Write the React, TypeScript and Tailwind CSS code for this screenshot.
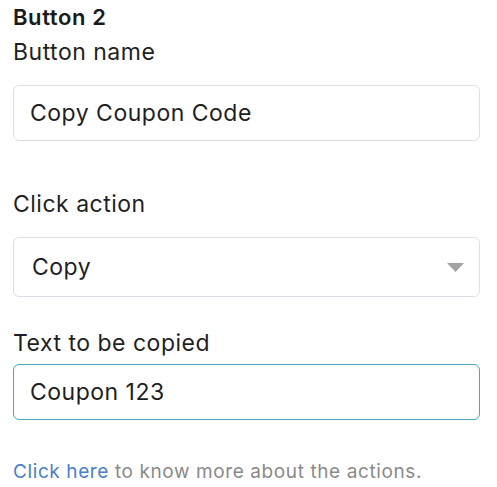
export default function App() {
  return (
    <div className="w-[497px] h-[487px] bg-white pl-[13px] pr-[17px] pt-[3px] tracking-[0.5px]" style={{ fontFamily: "Inter, 'Noto Sans', sans-serif" }}>
      <div className="text-[22px] font-semibold leading-[28px] text-[#1a1a1a] tracking-[0.6px]">Button 2</div>
      <div className="text-[23px] leading-[30px] text-[#1f1f1f] mt-[6px]">Button name</div>
      <div className="mt-[18px] h-[56px] rounded-[6px] border border-[#dcdfea] flex items-center pl-[16px] text-[23px] text-[#1f1f1f]">Copy Coupon Code</div>
      <div className="mt-[48px] text-[23px] leading-[30px] text-[#1f1f1f]">Click action</div>
      <div className="mt-[18px] h-[60px] rounded-[6px] border border-[#dcdfea] flex items-center justify-between pl-[18px] pr-[15px] text-[23px] text-[#1f1f1f]">
        <span>Copy</span>
        <svg width="17" height="9" viewBox="0 0 17 9"><polygon points="0,0 17,0 8.5,9" fill="#a3a3a3" /></svg>
      </div>
      <div className="mt-[31px] text-[23px] leading-[30px] text-[#1f1f1f]">Text to be copied</div>
      <div className="mt-[6px] h-[56px] rounded-[6px] border border-[#45a8bd] flex items-center pl-[16px] text-[23px] text-[#1f1f1f]">Coupon 123</div>
      <div className="mt-[39px] text-[19px] leading-[26px] text-[#8a8a8a] tracking-[0.6px]">
        <span className="text-[#4a80c9]">Click here</span> to know more about the actions.
      </div>
    </div>
  );
}
